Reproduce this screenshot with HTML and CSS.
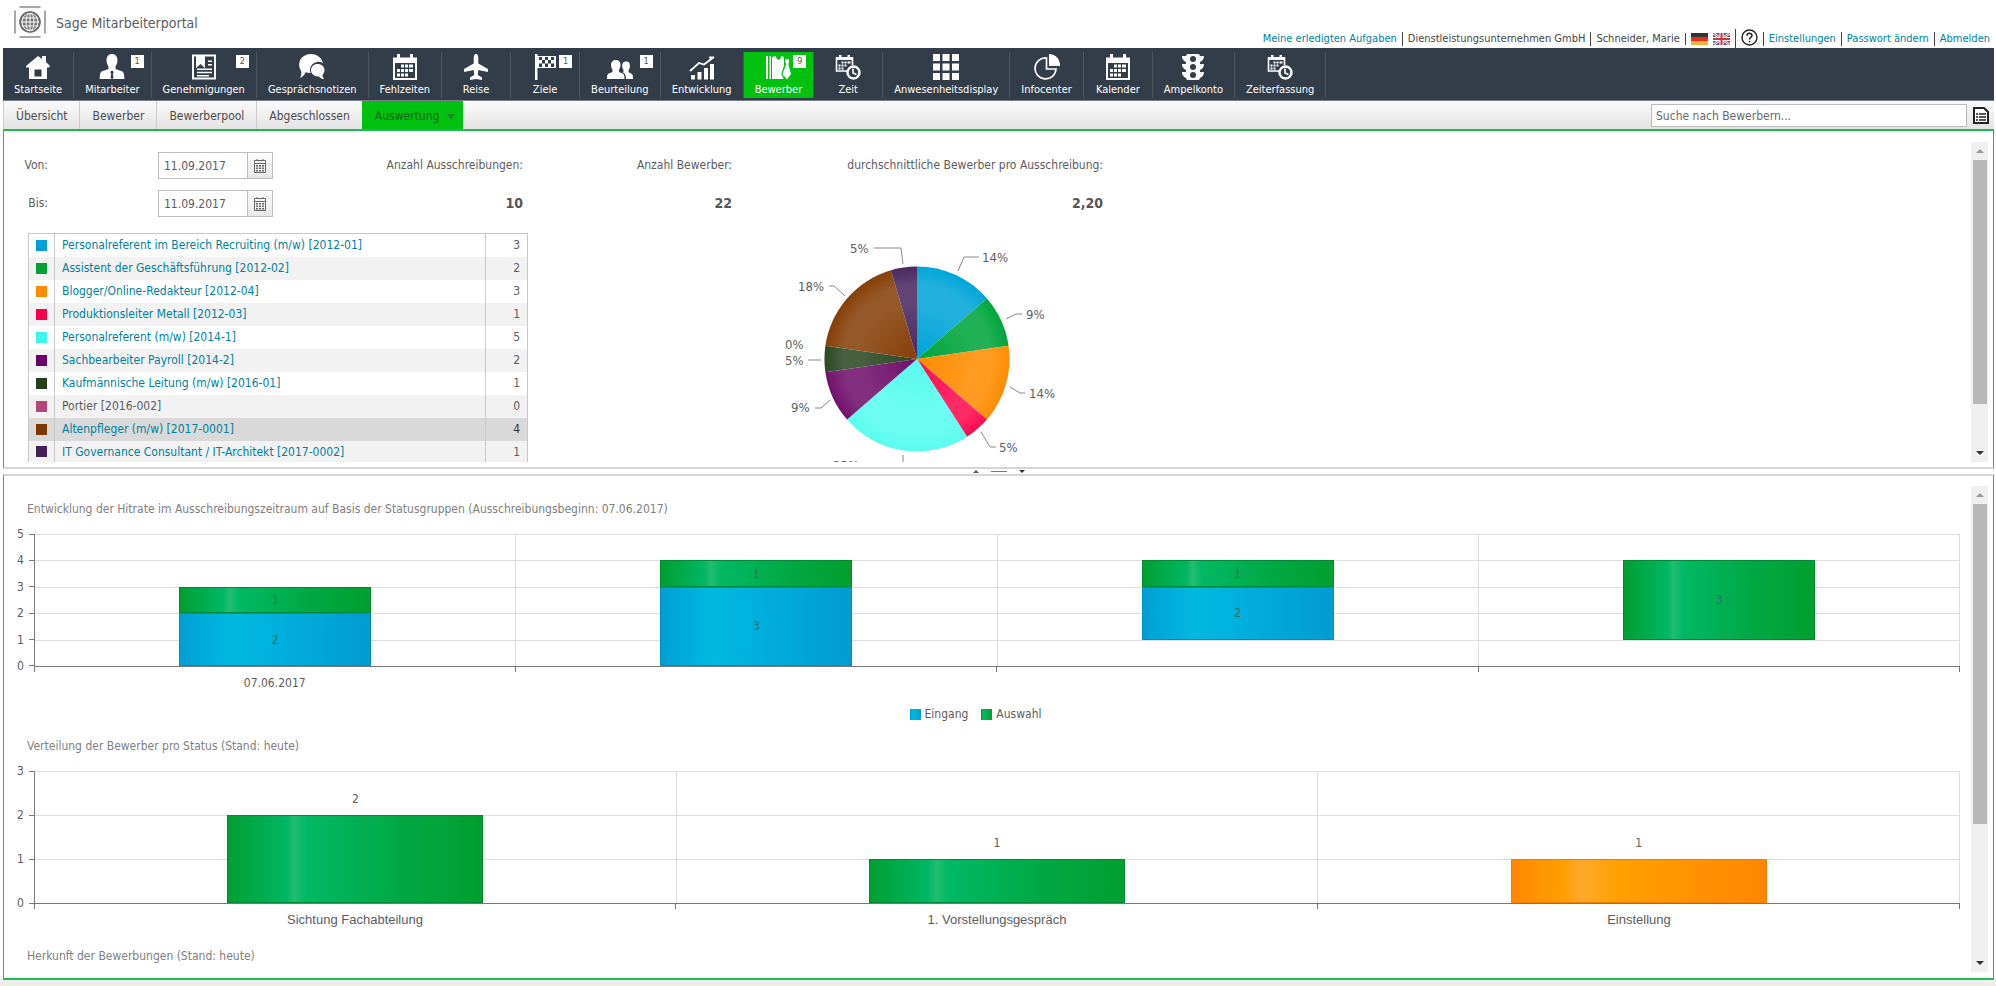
FILE: index.html
```html
<!DOCTYPE html>
<html lang="de">
<head>
<meta charset="utf-8">
<title>Sage Mitarbeiterportal</title>
<link rel="stylesheet" href="styles.css">
</head>
<body>
<svg class="defs" width="0" height="0" aria-hidden="true">
  <symbol id="i-home" viewBox="0 0 26 26"><path fill="currentColor" d="M1 12 13 2l4 3V2h4v6l4 4-1 1.500H22V25H4V13.500H1z"/><path class="cut" d="M9.500 15.500h7v7h-7z"/></symbol>
  <symbol id="i-person" viewBox="0 0 26 26"><path fill="currentColor" d="M13 0c4 0 5.500 3 5.500 6.500S16.500 12 16.500 13v2l7 2.500c1.500 1 1.700 4 1.900 7.500H.6c.2-3.500.4-6.500 1.900-7.500l7-2.500v-2c0-1-2-3-2-6.500S9 0 13 0z"/><path class="cut" d="M12 17h2l.7 1.500-.9 1L14.500 24 13 25l-1.500-1 .7-4.500-.9-1z"/></symbol>
  <symbol id="i-book" viewBox="0 0 26 26"><path fill="none" stroke="currentColor" stroke-width="2" d="M2 1.500h22v23H2z"/><path fill="currentColor" d="M5 1h9v13l-4.500-4L5 14zM17 6.500h4V8h-4zM17 10h4v1.500h-4zM6 14.500h15V16H6zM6 17.800h15v1.500H6zM6 21h12v1.500H6z"/></symbol>
  <symbol id="i-chat" viewBox="0 0 26 26"><path fill="currentColor" d="M12 0c6 0 11 4 12 9-2-1-4-1.500-6-1-4 .7-7 4-7 8 0 1 .2 2 .6 3-1.600.1-3.600-.2-5-.7C5.500 21 3.500 23 1 24c1.400-2.500 1.500-4.500 1-7.500C-.5 14-.5 7 2.500 4 5 1.300 8.500 0 12 0z"/><path fill="currentColor" d="M18.500 10c4 0 7 2.500 7 6.300 0 2-.9 3.700-2 4.800 0 1.500.5 2.800 1.500 4-2 0-4-1.300-5-2.700-4.500.5-8-2.400-8-6.100 0-3.700 3-6.300 6.500-6.300z"/></symbol>
  <symbol id="i-cal" viewBox="0 0 26 26"><path fill="none" stroke="currentColor" stroke-width="2" d="M2 4.500h22V25H2z"/><path fill="currentColor" d="M2 4h22v5H2zM5 0h3v6H5zM18 0h3v6h-3zM9 10.500h3v3H9zM13 10.500h3v3h-3zM17 10.500h4v3h-4zM5 15h3v3H5zM9 15h3v3H9zM13 15h3v3h-3zM17 15h4v3h-4zM5 19.500h3v3H5zM9 19.500h3v3H9zM13 19.500h3v3h-3z"/></symbol>
  <symbol id="i-plane" viewBox="0 0 26 26"><path fill="currentColor" d="M13 0c1.600 0 2.300 2 2.300 4v5.500L25 15v3l-9.700-2-.5 5 4.200 2.500V26l-6-1-6 1v-2.500L11.200 21l-.5-5L1 18v-3l9.700-5.500V4c0-2 .7-4 2.300-4z"/></symbol>
  <symbol id="i-flag" viewBox="0 0 26 26"><path fill="currentColor" d="M3 0h2.500v26H3zM5 2h19v12H5z"/><path class="cut" d="M7 3h3v3H7zM13 3h3v3h-3zM19 3h3v3h-3zM10 6h3v3.500h-3zM16 6h3v3.500h-3zM7 9.500h3V13H7zM13 9.500h3V13h-3zM19 9.500h3V13h-3z"/></symbol>
  <symbol id="i-people" viewBox="0 0 26 26"><path fill="currentColor" d="M9 6c3 0 4.500 2 4.500 5 0 2.500-1 3.500-1.500 5 0 2 0 2 2.500 3 2.500.8 3 2 3 6H0c0-4 .5-5.200 3-6 2.500-1 2.500-1 2.500-3C5 14.500 4 13.500 4 11c0-3 2-5 5-5z"/><path fill="currentColor" d="M19 7.500c3 0 4 2 4 4.500 0 2-1 3-1.500 4.500 0 1.500.2 2 2 2.800C25.500 20 26 21 26 25h-7c0-3.500-.7-5.500-3-6.500 1-1.500.6-2-.3-4C14.500 11 15.500 7.500 19 7.500z"/></symbol>
  <symbol id="i-growth" viewBox="0 0 26 26"><path fill="currentColor" d="M2 21h4v4.500H2zM8.500 18h4v7.500h-4zM15 14h4v11.500h-4zM21 10h4v15.500h-4z"/><path fill="none" stroke="currentColor" stroke-width="1.800" d="M1 17 10 9l5 1.500L25 3M20 3.500h4.800"/></symbol>
  <symbol id="i-applicant" viewBox="0 0 26 26"><path fill="currentColor" d="M1 2h2v23H1zM4.500 2H6v23H4.500zM7 3l4-1c0 5 5 5 5 0l3 1v22H7zM21 5h2.500l.8 2-1 3L26 20l-3.500 5h-1L17.500 20l3.500-10-1-3z"/><path fill="none" stroke="#00c010" stroke-width="1.200" d="M20.500 9 17 20l2.500 5.500"/></symbol>
  <symbol id="i-time" viewBox="0 0 26 26"><path fill="none" stroke="currentColor" stroke-width="1.600" d="M12 17H1.500V4h16v7"/><path fill="currentColor" d="M1 3h17v3H1zM4 1h2.500v4H4zM12.500 1H15v4h-2.500zM6.500 7.500h2v2h-2zM9.500 7.500h2v2h-2zM12.500 7.500h3v2h-3zM3.500 10.500h2v2h-2zM6.500 10.500h2v2h-2zM9.500 10.500h2v2h-2zM3.500 13.500h2v2h-2zM6.500 13.500h2v2h-2z"/><circle cx="18.500" cy="18.500" r="6" fill="none" stroke="currentColor" stroke-width="2.400"/><path fill="none" stroke="currentColor" stroke-width="1.600" d="M18 14.500V19l3.500 1.500"/></symbol>
  <symbol id="i-grid" viewBox="0 0 26 26"><path fill="currentColor" d="M0 0h7v7H0zM9.500 0h7v7h-7zM19 0h7v7h-7zM0 9.500h7v7H0zM9.500 9.500h7v7h-7zM19 9.500h7v7h-7zM0 19h7v7H0zM9.500 19h7v7h-7zM19 19h7v7h-7z"/></symbol>
  <symbol id="i-pie" viewBox="0 0 26 26"><path fill="none" stroke="currentColor" stroke-width="1.700" d="M12.500 4A10.500 10.500 0 1 0 22 15H12.500z"/><path fill="currentColor" d="M15 0a11 11 0 0 1 11 12H15z"/></symbol>
  <symbol id="i-traffic" viewBox="0 0 26 26"><path fill="currentColor" d="M7 0h12l1 2h4c0 3-1.500 5-4 6v2h4c0 3-1.500 5-4 6v2h4c0 3-1.500 5-4 6l-1 2H7l-1-2c-2.500-1-4-3-4-6h4v-2c-2.500-1-4-3-4-6h4V8C3.500 7 2 5 2 2h4z"/><g class="cut"><circle cx="13" cy="5" r="3"/><circle cx="13" cy="13" r="3"/><circle cx="13" cy="21" r="3"/></g></symbol>
  <symbol id="i-picker" viewBox="0 0 14 16"><path fill="none" stroke="#666" d="M1.500 2.500h11v12h-11zM1.500 5.500h11M4 1v2M10 1v2"/><path fill="#666" d="M3 7h2v1.500H3zM6 7h2v1.500H6zM9 7h2v1.500H9zM3 9.500h2V11H3zM6 9.500h2V11H6zM9 9.500h2V11H9zM3 12h2v1.500H3zM6 12h2v1.500H6zM9 12h2v1.500H9z"/></symbol>
</svg>

<header class="top">
  <div class="brand">
    <svg class="logo" viewBox="0 0 32 32" aria-hidden="true">
      <g fill="none" stroke="#8a8a8a" stroke-width="1.500"><path d="M6 1h20M6 31h20M1 5v22M31 5v22" stroke-linecap="round"/></g>
      <circle cx="16" cy="16" r="10.500" fill="#777"/>
      <g fill="none" stroke="#fff" stroke-width="1"><ellipse cx="16" cy="16" rx="8" ry="9"/><ellipse cx="16" cy="16" rx="4" ry="9"/><path d="M16 7v18M7 12h18M6 16h20M7 20h18"/></g>
      <circle cx="16" cy="16" r="10" fill="none" stroke="#666" stroke-width="1.500"/>
    </svg>
    <span>Sage Mitarbeiterportal</span>
  </div>
  <div class="meta">
    <a href="#">Meine erledigten Aufgaben</a>
    <span>Dienstleistungsunternehmen GmbH</span>
    <span>Schneider, Marie</span>
    <span class="flags">
      <svg viewBox="0 0 17 12"><path fill="#333" d="M0 0h17v4H0z"/><path fill="#e0301e" d="M0 4h17v4H0z"/><path fill="#f8b33a" d="M0 8h17v4H0z"/></svg>
      <svg viewBox="0 0 17 12"><path fill="#4a5f9e" d="M0 0h17v12H0z"/><path stroke="#fff" stroke-width="2.500" d="m0 0 17 12M17 0 0 12"/><path stroke="#d9444f" d="m0 0 17 12M17 0 0 12"/><path stroke="#fff" stroke-width="4" d="M8.500 0v12M0 6h17"/><path stroke="#d9303c" stroke-width="2" d="M8.500 0v12M0 6h17"/></svg>
    </span>
    <span class="help"><svg viewBox="0 0 17 17" role="img" aria-label="Hilfe"><circle cx="8.500" cy="8.500" r="7.500" fill="none" stroke="#222" stroke-width="1.400"/><path fill="none" stroke="#222" stroke-width="1.500" d="M6 6.800C6 3.500 11 3.700 11 6.500 11 8.500 8.500 8.300 8.500 10.500M8.500 11.700v1.600"/></svg></span>
    <a href="#">Einstellungen</a>
    <a href="#">Passwort ändern</a>
    <a href="#">Abmelden</a>
  </div>
</header>

<nav class="main-nav">
  <a href="#"><svg><use href="#i-home"/></svg>Startseite</a>
  <a href="#"><svg><use href="#i-person"/></svg>Mitarbeiter<b class="badge">1</b></a>
  <a href="#"><svg><use href="#i-book"/></svg>Genehmigungen<b class="badge">2</b></a>
  <a href="#"><svg><use href="#i-chat"/></svg>Gesprächsnotizen</a>
  <a href="#"><svg><use href="#i-cal"/></svg>Fehlzeiten</a>
  <a href="#"><svg><use href="#i-plane"/></svg>Reise</a>
  <a href="#"><svg><use href="#i-flag"/></svg>Ziele<b class="badge">1</b></a>
  <a href="#"><svg><use href="#i-people"/></svg>Beurteilung<b class="badge">1</b></a>
  <a href="#"><svg><use href="#i-growth"/></svg>Entwicklung</a>
  <a href="#" class="active"><svg><use href="#i-applicant"/></svg>Bewerber<b class="badge">9</b></a>
  <a href="#"><svg><use href="#i-time"/></svg>Zeit</a>
  <a href="#"><svg><use href="#i-grid"/></svg>Anwesenheitsdisplay</a>
  <a href="#"><svg><use href="#i-pie"/></svg>Infocenter</a>
  <a href="#"><svg><use href="#i-cal"/></svg>Kalender</a>
  <a href="#"><svg><use href="#i-traffic"/></svg>Ampelkonto</a>
  <a href="#"><svg><use href="#i-time"/></svg>Zeiterfassung</a>
</nav>

<div class="sub-nav">
  <nav class="tabs">
    <a href="#">Übersicht</a>
    <a href="#">Bewerber</a>
    <a href="#">Bewerberpool</a>
    <a href="#">Abgeschlossen</a>
    <a href="#" class="active">Auswertung <i class="caret"></i></a>
  </nav>
  <div class="search">
    <input type="text" placeholder="Suche nach Bewerbern..." aria-label="Suche nach Bewerbern">
    <button type="button" aria-label="Liste"><svg viewBox="0 0 16 17"><path fill="#fff" stroke="#222" stroke-width="2" d="M1 1h10l4 4v11H1z"/><path stroke="#222" stroke-width="1.600" d="M3 7h2M6 7h7M3 10h2M6 10h7M3 13h2M6 13h7"/></svg></button>
  </div>
</div>

<main>
  <section class="pane upper">
    <div class="view">
      <div class="filters">
        <div class="dates">
          <label for="von">Von:</label>
          <div class="date"><input id="von" type="text" value="11.09.2017"><button type="button" aria-label="Kalender Von"><svg><use href="#i-picker"/></svg></button></div>
          <label for="bis">Bis:</label>
          <div class="date"><input id="bis" type="text" value="11.09.2017"><button type="button" aria-label="Kalender Bis"><svg><use href="#i-picker"/></svg></button></div>
        </div>
        <dl class="stat s1"><dt>Anzahl Ausschreibungen:</dt><dd>10</dd></dl>
        <dl class="stat s2"><dt>Anzahl Bewerber:</dt><dd>22</dd></dl>
        <dl class="stat s3"><dt>durchschnittliche Bewerber pro Ausschreibung:</dt><dd>2,20</dd></dl>
      </div>
      <div class="overview">
        <table class="jobs">
          <tr><td><i style="background:#009fd5"></i></td><td><a href="#">Personalreferent im Bereich Recruiting (m/w) [2012-01]</a></td><td>3</td></tr>
          <tr><td><i style="background:#00a235"></i></td><td><a href="#">Assistent der Geschäftsführung [2012-02]</a></td><td>2</td></tr>
          <tr><td><i style="background:#ff8b00"></i></td><td><a href="#">Blogger/Online-Redakteur [2012-04]</a></td><td>3</td></tr>
          <tr><td><i style="background:#fb0048"></i></td><td><a href="#">Produktionsleiter Metall [2012-03]</a></td><td>1</td></tr>
          <tr><td><i style="background:#3ff5ec"></i></td><td><a href="#">Personalreferent (m/w) [2014-1]</a></td><td>5</td></tr>
          <tr><td><i style="background:#6a0068"></i></td><td><a href="#">Sachbearbeiter Payroll [2014-2]</a></td><td>2</td></tr>
          <tr><td><i style="background:#24401d"></i></td><td><a href="#">Kaufmännische Leitung (m/w) [2016-01]</a></td><td>1</td></tr>
          <tr><td><i style="background:#b5467c"></i></td><td>Portier [2016-002]</td><td>0</td></tr>
          <tr class="selected"><td><i style="background:#7c3800"></i></td><td><a href="#">Altenpfleger (m/w) [2017-0001]</a></td><td>4</td></tr>
          <tr><td><i style="background:#432055"></i></td><td><a href="#">IT Governance Consultant / IT-Architekt [2017-0002]</a></td><td>1</td></tr>
        </table>
        <svg class="pie" viewBox="0 0 290 250" width="290" height="250" role="img" aria-label="Bewerber je Ausschreibung">
          <defs>
            <radialGradient id="shine" gradientUnits="userSpaceOnUse" cx="0" cy="0" r="93">
              <stop offset="0" stop-color="#fff" stop-opacity="0"/><stop offset=".6" stop-color="#fff" stop-opacity=".13"/><stop offset=".8" stop-color="#fff" stop-opacity=".13"/><stop offset="1" stop-color="#fff" stop-opacity="0"/>
            </radialGradient>
          </defs>
          <g transform="translate(135 126)">
            <path fill="#00a5d8" d="M0 0V-92.500A92.500 92.500 0 0 1 69.900-60.600z"/>
            <path fill="#00a53c" d="M0 0 69.900-60.600A92.500 92.500 0 0 1 91.600-13.200z"/>
            <path fill="#ff8c00" d="M0 0 91.600-13.200A92.500 92.500 0 0 1 69.900 60.600z"/>
            <path fill="#ff0a50" d="M0 0 69.900 60.600A92.500 92.500 0 0 1 50 77.800z"/>
            <path fill="#58fcef" d="M0 0 50 77.800A92.500 92.500 0 0 1-69.900 60.600z"/>
            <path fill="#70106c" d="M0 0-69.900 60.600A92.500 92.500 0 0 1-91.600 13.200z"/>
            <path fill="#2a4823" d="M0 0-91.600 13.200A92.500 92.500 0 0 1-91.600-13.200z"/>
            <path fill="#863f08" d="M0 0-91.600-13.200A92.500 92.500 0 0 1-26.100-88.800z"/>
            <path fill="#4a2860" d="M0 0-26.100-88.800A92.500 92.500 0 0 1 0-92.500z"/>
            <circle r="92.500" fill="url(#shine)"/>
            <path class="lead" d="M41-88 47-102H62M89-40 99-45H105M93 28 103 34H108M64 73 73 88H79M-14 96V110M-87 41-96 49H-102M-96 1H-109M-72-63-83-73H-88M-14-95-16-111H-43"/>
            <g class="pct">
              <text x="65" y="-97">14%</text><text x="109" y="-40">9%</text><text x="112" y="39">14%</text><text x="82" y="93">5%</text><text x="-84" y="111">23%</text><text x="-126" y="53">9%</text><text x="-132" y="6">5%</text><text x="-132" y="-10">0%</text><text x="-119" y="-68">18%</text><text x="-67" y="-106">5%</text>
            </g>
          </g>
        </svg>
      </div>
    </div>
    <div class="scroll"><i class="up"></i><div class="track"><div class="thumb" style="height:86%"></div></div><i class="down"></i></div>
  </section>

  <div class="splitter"><i class="up"></i><span></span><i class="down"></i></div>

  <section class="pane lower">
    <div class="view charts">
      <h2>Entwicklung der Hitrate im Ausschreibungszeitraum auf Basis der Statusgruppen (Ausschreibungsbeginn: 07.06.2017)</h2>
      <div class="chart">
        <div class="y-axis"><span>5</span><span>4</span><span>3</span><span>2</span><span>1</span><span>0</span></div>
        <div class="plot">
          <div class="lines"><i></i><i></i><i></i><i></i><i></i></div>
          <div class="cat"><div class="bar green" style="height:20%">1</div><div class="bar blue" style="height:40%">2</div></div>
          <div class="cat"><div class="bar green" style="height:20%">1</div><div class="bar blue" style="height:60%">3</div></div>
          <div class="cat"><div class="bar green" style="height:20%">1</div><div class="bar blue" style="height:40%">2</div><div style="height:20%"></div></div>
          <div class="cat"><div class="bar green" style="height:60%">3</div><div style="height:20%"></div></div>
        </div>
        <div class="x-axis"><span>07.06.2017</span><span></span><span></span><span></span></div>
      </div>
      <div class="legend"><span><i class="blue"></i>Eingang</span><span><i class="green"></i>Auswahl</span></div>
      <h2>Verteilung der Bewerber pro Status (Stand: heute)</h2>
      <div class="chart names">
        <div class="y-axis"><span>3</span><span>2</span><span>1</span><span>0</span></div>
        <div class="plot">
          <div class="lines"><i></i><i></i><i></i></div>
          <div class="cat"><em>2</em><div class="bar green" style="height:66.667%"></div></div>
          <div class="cat"><em>1</em><div class="bar green" style="height:33.333%"></div></div>
          <div class="cat"><em>1</em><div class="bar orange" style="height:33.333%"></div></div>
        </div>
        <div class="x-axis"><span>Sichtung Fachabteilung</span><span>1. Vorstellungsgespräch</span><span>Einstellung</span></div>
      </div>
      <h2>Herkunft der Bewerbungen (Stand: heute)</h2>
    </div>
    <div class="scroll"><i class="up"></i><div class="track"><div class="thumb" style="height:71%"></div></div><i class="down"></i></div>
  </section>
</main>
</body>
</html>
```
FILE: styles.css
```css
* { box-sizing: border-box; }

body {
  margin: 0;
  height: 100vh;
  padding: 0 2px 6px 3px;
  display: flex;
  flex-direction: column;
  overflow: hidden;
  background: linear-gradient(#fff, #fff) 0 0 / 100% calc(100% - 7px) no-repeat #ededea;
  font: 12px/16px "DejaVu Sans Condensed", "Noto Sans", sans-serif;
  color: #5c5c5c;
}

a { color: #007f9c; text-decoration: none; }
.defs { position: absolute; }
svg { flex: none; }

/* header */
.top {
  height: 48px;
  padding: 6px 4px 0 11px;
  display: flex;
  justify-content: space-between;
}
.brand { display: flex; gap: 10px; font-size: 14px; line-height: 34px; }
.logo { width: 32px; height: 32px; }
.meta {
  display: flex;
  align-items: center;
  align-self: flex-end;
  font-size: 11px;
  line-height: 14px;
  color: #444;
}
.meta > * { padding: 0 5px; border-left: 1px solid #444; }
.meta > :first-child { border-left: 0; }
.meta > :last-child { padding-right: 0; }
.flags { display: flex; gap: 5px; }
.flags svg { width: 17px; height: 12px; }
.meta .help { height: 19px; }
.help svg { width: 17px; height: 17px; }

/* main navigation */
.main-nav {
  display: flex;
  height: 53px;
  padding: 4px 0 2px;
  background: #333d49;
  border-bottom: 1px solid #77808a;
}
.main-nav a {
  position: relative;
  display: flex;
  flex-direction: column;
  align-items: center;
  min-width: 69px;
  padding: 2px 11px 0;
  gap: 2px;
  border-right: 1px solid #4d5762;
  font-size: 11px;
  color: #fff;
}
.main-nav svg { width: 26px; height: 26px; }
.cut { fill: #333d49; }
.main-nav .active { background: #00c010; }
.badge {
  position: absolute;
  top: 3px;
  right: 7px;
  width: 13px;
  height: 13px;
  background: #fff;
  color: #555;
  font-size: 9px;
  font-weight: 400;
  line-height: 13px;
  text-align: center;
}

/* second level */
.sub-nav {
  display: flex;
  justify-content: space-between;
  height: 28px;
  background: linear-gradient(#fbfbfb, #e3e3e3);
}
.tabs { display: flex; }
.tabs a {
  padding: 0 12px;
  border-left: 1px solid #ccc;
  line-height: 30px;
  color: #4c4c4c;
}
.tabs .active { background: #00c010; border-color: #00c010; color: #08661c; padding-right: 8px; }
.caret {
  display: inline-block;
  margin-left: 4px;
  border: 4px solid transparent;
  border-top: 6px solid #1a8a2c;
  border-bottom: 0;
}
.search { display: flex; align-items: center; gap: 6px; padding: 1px 5px 0 0; }
.search input {
  width: 316px;
  height: 23px;
  padding: 0 4px;
  border: 1px solid #bbb;
  font: inherit;
}
.search input::placeholder { color: #6a6a6a; }
.search button { padding: 0; border: 0; background: none; display: flex; }
.search button svg { width: 16px; height: 17px; }

/* split panes */
main { flex: 1; min-height: 0; display: flex; flex-direction: column; }
.pane {
  display: flex;
  justify-content: space-between;
  border: 1px solid #25b956;
  background: #fff;
}
.upper { flex: 0 0 340px; min-height: 0; border-top-width: 2px; border-bottom: 2px solid #d6d6d6; padding: 11px 5px 5px 0; }
.lower { flex: 1; min-height: 0; border-top: 2px solid #d6d6d6; border-bottom-width: 2px; padding: 10px 5px 6px 0; }
.view { flex: 1; min-width: 0; overflow: hidden; }
.upper .view { height: 320px; }

.splitter { height: 5px; display: flex; justify-content: center; align-items: center; gap: 12px; background: #fff; }
.splitter span { width: 16px; height: 1px; background: #777; }
.up, .down { display: block; width: 0; border: 3px solid transparent; }
.up { border-top: 0; border-bottom: 3px solid #999; }
.down { border-bottom: 0; border-top: 3px solid #333; }
.splitter .up { border-bottom-color: #555; }

.scroll {
  display: flex;
  flex-direction: column;
  align-items: center;
  width: 17px;
  background: #efefef;
}
.scroll .up { margin: 7px 0; border-width: 0 4px 4px; }
.scroll .down { margin: 7px 0; border-width: 4px 4px 0; }
.track { flex: 1; width: 14px; }
.thumb { background: #b8b8b8; }

/* filter row */
.filters { display: flex; padding: 10px 0 0 19px; height: 91px; }
.dates { display: grid; grid-template-columns: 25px auto; column-gap: 110px; row-gap: 11px; align-content: start; }
.dates label { text-align: right; line-height: 27px; }
.date { display: flex; }
.date input {
  width: 90px;
  height: 27px;
  padding: 0 5px;
  border: 1px solid #bdbdbd;
  font: inherit;
  color: inherit;
}
.date button {
  width: 26px;
  height: 27px;
  margin-left: -1px;
  padding: 0;
  display: grid;
  place-items: center;
  border: 1px solid #bdbdbd;
  background: linear-gradient(#fdfdfd, #e8e8e8);
}
.date svg { width: 14px; height: 16px; }
.stat { margin: 0; line-height: 27px; text-align: right; white-space: nowrap; }
.stat dd { margin: 11px 0 0; font-weight: 700; font-size: 14px; color: #555; }
.s1 { width: 250px; }
.s2 { width: 209px; }
.s3 { width: 371px; }

/* job list and pie */
.overview { display: flex; padding-left: 24px; gap: 254px; }
.jobs { width: 500px; border-collapse: collapse; border: 1px solid #c8c8c8; align-self: flex-start; }
.jobs td { height: 23px; padding: 0 7px; }
.jobs td:first-child { width: 26px; }
.jobs td:last-child { width: 42px; text-align: right; }
.jobs td + td { border-left: 1px solid #c8c8c8; }
.jobs tr:nth-child(even) { background: #f2f2f2; }
.jobs .selected { background: #d9d9d9; color: #333; }
.jobs i { display: block; width: 11px; height: 11px; }
.lead { fill: none; stroke: #888; stroke-width: 1; }
.pct { fill: #5c5c5c; font-size: 13px; }

/* charts */
.charts { padding: 14px 7px 0; }
.charts h2 { margin: 0 16px; font-size: 12px; font-weight: 400; line-height: 18px; color: #808080; }
.chart {
  display: grid;
  grid-template-columns: 23px 1fr;
  padding: 16px 4px 0 0;
}
.y-axis {
  display: flex;
  flex-direction: column;
  justify-content: space-between;
  height: 148px;
  margin: -8px 0;
}
.y-axis span { display: flex; align-items: center; gap: 5px; padding-left: 6px; }
.y-axis span::after { content: ""; flex: 1; height: 1px; background: #777; }
.plot {
  position: relative;
  display: flex;
  height: 133px;
  border-left: 1px solid #777;
  border-bottom: 1px solid #777;
}
.lines { position: absolute; inset: 0; display: flex; flex-direction: column; }
.lines i { flex: 1; border-top: 1px solid #dedede; }
.cat {
  flex: 1;
  position: relative;
  display: flex;
  flex-direction: column;
  justify-content: flex-end;
  align-items: center;
  border-right: 1px solid #dcdcdc;
}
.bar {
  width: 40%;
  display: flex;
  align-items: center;
  justify-content: center;
  border: 1px solid #008a36;
  color: #2f6f5e;
}
.blue { background: linear-gradient(90deg, #009fd4, #00b9e0 27%, #00aedb 55%, #009cd2); border-color: #0090c0; }
.green { background: linear-gradient(90deg, #009f31, #00b765 23%, #22bd70 26%, #00b965 31%, #00a945 66%, #009f2f); }
.orange { background: linear-gradient(90deg, #ff8800, #ff9f00 20%, #ffa92d 27%, #ffa000 42%, #ff8700); border-color: #f07c00; }
.cat em { font-style: normal; margin-bottom: 8px; }
.x-axis { grid-column: 2; display: flex; height: 34px; }
.x-axis span { flex: 1; text-align: center; padding-top: 8px; background: linear-gradient(#777, #777) 100% 0 / 1px 5px no-repeat; }
.x-axis span:first-child { background: linear-gradient(#777, #777) 100% 0 / 1px 5px no-repeat, linear-gradient(#777, #777) 0 0 / 1px 5px no-repeat; }
.names .x-axis { height: 43px; font-family: "Liberation Sans", Arial, sans-serif; font-size: 13px; }
.legend { display: flex; justify-content: center; gap: 13px; padding: 5px 24px 15px 0; }
.legend span { display: flex; align-items: center; gap: 4px; }
.legend i { width: 11px; height: 11px; }
```
